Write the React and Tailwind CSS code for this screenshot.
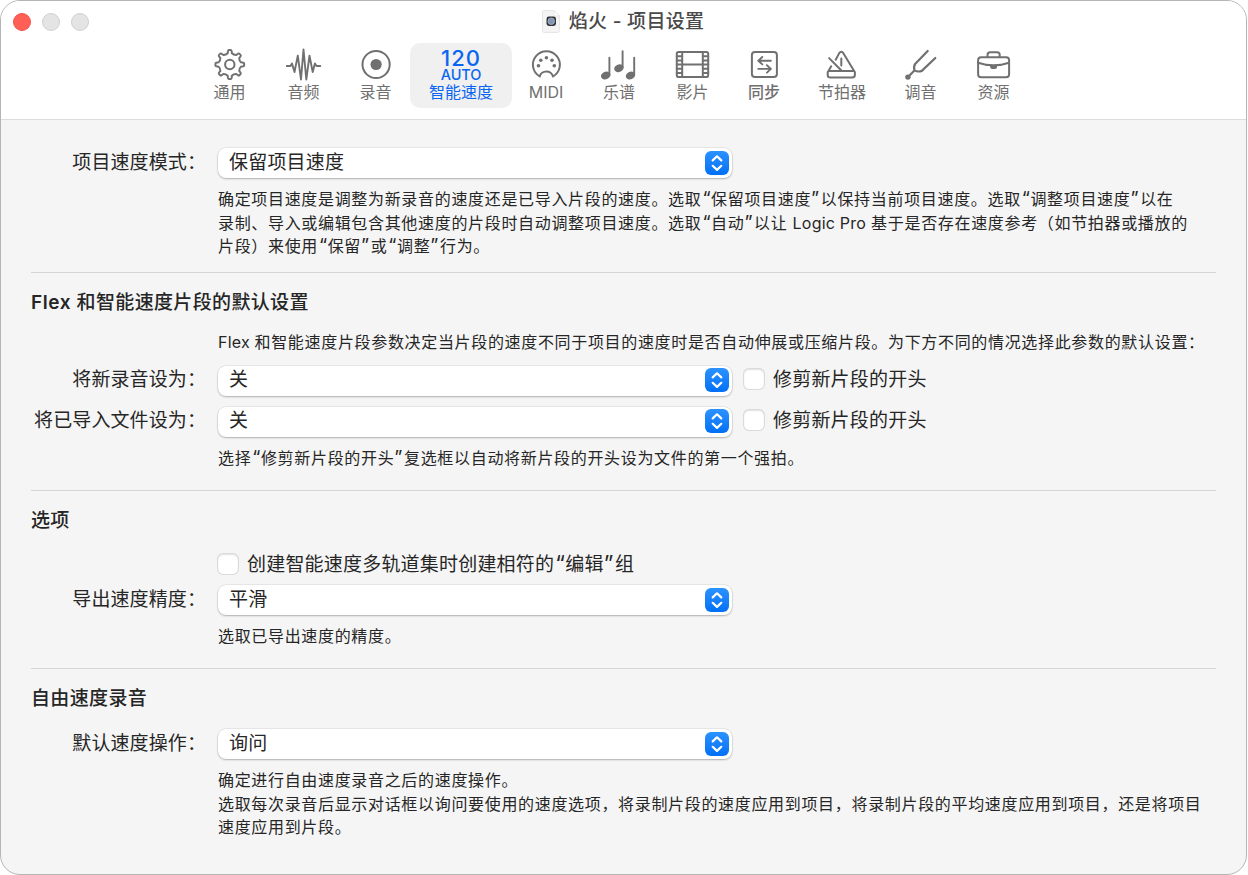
import React from "react";

const stroke = {
  fill: "none",
  stroke: "currentColor",
  strokeWidth: 2,
  strokeLinecap: "round",
  strokeLinejoin: "round",
};

function gearPath(teeth, outer, inner) {
  const pt = (r, a) => `${(r * Math.cos(a)).toFixed(2)} ${(r * Math.sin(a)).toFixed(2)}`;
  const step = (Math.PI * 2) / teeth;
  let d = "";
  for (let i = 0; i < teeth; i++) {
    const a = i * step - Math.PI / 2;
    d += `${i ? "L" : "M"}${pt(inner, a - step * 0.24)}`;
    d += `L${pt(outer - 0.8, a - step * 0.17)}Q${pt(outer + 0.2, a - step * 0.13)} ${pt(outer, a - step * 0.06)}`;
    d += `L${pt(outer, a + step * 0.06)}Q${pt(outer + 0.2, a + step * 0.13)} ${pt(outer - 0.8, a + step * 0.17)}`;
    d += `L${pt(inner, a + step * 0.24)}`;
    d += `Q${pt(inner - 1.3, a + step * 0.5)} ${pt(inner, a + step * 0.76)}`;
  }
  return d + "Z";
}

function Icon({ children }) {
  return (
    <svg className="shrink-0" width="36" height="36" viewBox="0.5 0 36 36" {...stroke}>
      {children}
    </svg>
  );
}

const GearIcon = () => (
  <Icon>
    <g transform="translate(18.3 17.5)">
      <path d={gearPath(8, 14.4, 11.4)} />
      <circle r="4.7" />
    </g>
  </Icon>
);

const WaveIcon = () => (
  <Icon>
    <path strokeWidth="1.9" d="M1.2 19H5l1.5-2.6L9 25l3.3-16.4L15.500 32.500 18 2.500 20.800 32.500 24 8.600 27.200 25l2.200-8.600L31 19h3.800" />
  </Icon>
);

const RecordIcon = () => (
  <Icon>
    <circle cx="18.600" cy="17.500" r="13.600" />
    <circle cx="18.600" cy="17.500" r="5.600" fill="currentColor" stroke="none" />
  </Icon>
);

const MidiIcon = () => (
  <Icon>
    <path d="M12.300 29.500A13.500 13.500 0 1 1 25.500 29.500C24.500 26.500 22 24.600 18.900 24.600S12.900 26.500 12.300 29.500Z" />
    <g fill="currentColor" stroke="none">
      <circle cx="11" cy="18.700" r="1.800" />
      <circle cx="13.300" cy="13.300" r="1.800" />
      <circle cx="18.900" cy="10.700" r="1.800" />
      <circle cx="24.500" cy="13.300" r="1.800" />
      <circle cx="26.800" cy="18.700" r="1.800" />
    </g>
  </Icon>
);

const NotesIcon = () => (
  <Icon>
    <g strokeWidth="1.900">
      <path d="M8.900 10.800V28M22.100 4.200V20.500M33.700 10.800V28" />
    </g>
    <g fill="currentColor" stroke="none">
      <ellipse cx="5.200" cy="28.500" rx="4.800" ry="3.800" transform="rotate(-20 5.200 28.500)" />
      <ellipse cx="18.400" cy="21.200" rx="4.800" ry="3.800" transform="rotate(-20 18.400 21.200)" />
      <ellipse cx="30" cy="28.500" rx="4.800" ry="3.800" transform="rotate(-20 30 28.500)" />
    </g>
  </Icon>
);

const FilmIcon = () => (
  <Icon>
    <rect x="2.300" y="5" width="31.400" height="25" rx="1.800" />
    <path strokeWidth="2" d="M7.700 5V30M28.300 5V30M7.700 17.600H28.300M2.300 9.300H7.700M2.300 13.400H7.700M2.300 17.600H7.700M2.300 21.800H7.700M2.300 25.900H7.700M28.300 9.300H33.700M28.300 13.400H33.700M28.300 17.600H33.700M28.300 21.800H33.700M28.300 25.900H33.700" />
  </Icon>
);

const SyncIcon = () => (
  <Icon>
    <rect x="6.400" y="5" width="25" height="25" rx="3" />
    <path strokeWidth="1.900" d="M25.400 13.700H12.800M16.800 10L12.800 13.700L16.800 17.400M12.800 21.900H25.400M21.400 18.200L25.400 21.900L21.400 25.600" />
  </Icon>
);

const MetronomeIcon = () => (
  <Icon>
    <path d="M12.200 12.700L15.600 6.400Q17.800 3 20 6.400L31.400 25.300V28.200Q31.100 30.500 28.800 30.500H6.800Q4.300 30.500 4.200 28.200V25.300L7.700 19.300M5.100 24.100H30.500M5.600 11.100L18.100 23.700M17.800 11.500V18.500" />
  </Icon>
);

const ForkIcon = () => (
  <Icon>
    <path strokeWidth="2.200" d="M25.200 4L12.600 17Q11 19.300 11.900 23.400Q15.500 25.300 19.300 23.900L32.800 11M11.900 23.400L6 29.500" />
    <circle cx="5.400" cy="30.100" r="2.700" fill="currentColor" stroke="none" />
  </Icon>
);

const BriefcaseIcon = () => (
  <Icon>
    <rect x="2.600" y="10.200" width="31" height="20" rx="3" />
    <path d="M12 10V8Q12 5.300 14.500 5.300H21.700Q24.200 5.300 24.200 8V10M2.600 15.700Q18 21 33.600 15.700" />
    <path d="M14.600 18.200h7v1.800q-.3 2-2 2h-3q-1.700 0-2-2z" fill="currentColor" stroke="none" />
  </Icon>
);

function Tab({ width, label, icon, bold }) {
  return (
    <button className={`flex h-[65px] flex-col items-center pt-1 text-[#707070] ${width}`}>
      {icon}
      <span className={`-mt-[3px] whitespace-nowrap text-base leading-[24px] ${bold ? "font-medium" : ""}`}>{label}</span>
    </button>
  );
}

function Toolbar() {
  return (
    <nav className="flex justify-start pl-[192px]">
      <Tab width="w-[73px]" label="通用" icon={<GearIcon />} />
      <Tab width="w-[75px]" label="音频" icon={<WaveIcon />} />
      <Tab width="w-[69px]" label="录音" icon={<RecordIcon />} />
      <button className="flex h-[65px] w-[102px] flex-col items-center rounded-[10px] bg-[#f0f0f0] text-[#0a66f0]">
        <span className="mt-[5px] text-[22px] font-medium leading-[20px] tracking-[1px]">120</span>
        <span className="text-[14.5px] font-medium leading-[14px] tracking-[-0.1px]">AUTO</span>
        <span className="-mt-[2px] text-base leading-[24px]">智能速度</span>
      </button>
      <Tab width="w-[68px]" label="MIDI" icon={<MidiIcon />} />
      <Tab width="w-[78px]" label="乐谱" icon={<NotesIcon />} />
      <Tab width="w-[69px]" label="影片" icon={<FilmIcon />} />
      <Tab width="w-[74px]" label="同步" icon={<SyncIcon />} bold />
      <Tab width="w-[82px]" label="节拍器" icon={<MetronomeIcon />} />
      <Tab width="w-[75px]" label="调音" icon={<ForkIcon />} />
      <Tab width="w-[71px]" label="资源" icon={<BriefcaseIcon />} />
    </nav>
  );
}

function TitleBar() {
  return (
    <div className="grid h-[42px] grid-cols-[1fr_auto_1fr] items-center pl-[12px]">
      <div className="flex gap-[11px]">
        <span className="size-[18px] rounded-full border border-[#f0544c] bg-[#ff5f57]" />
        <span className="size-[18px] rounded-full border border-[#d0d0d0] bg-[#e4e4e4]" />
        <span className="size-[18px] rounded-full border border-[#d0d0d0] bg-[#e4e4e4]" />
      </div>
      <div className="flex items-center gap-[9px] pr-[13px]">
        <svg className="-mt-[2px]" width="18" height="23" viewBox="0 0 18 23">
          <path d="M2 .5H12L17.500 6V20.500Q17.500 22.500 15.500 22.500H2.500Q.5 22.500 .5 20.500V2Q.5 .5 2 .5Z" fill="#f4f4f4" stroke="#e6e6e6" />
          <path d="M12 .5V6H17.500Z" fill="#fff" stroke="#e2e2e2" strokeWidth=".7" />
          <rect x="4.500" y="6.500" width="9.500" height="9.500" rx="2.400" fill="#30343a" />
          <circle cx="9.250" cy="11.250" r="3.300" fill="#8295b5" stroke="#b8c0cc" strokeWidth=".7" />
        </svg>
        <h1 className="whitespace-nowrap text-[19px] font-medium leading-6 tracking-[0.300px] text-[#4a4a4a]">焰火 - 项目设置</h1>
      </div>
    </div>
  );
}

function Select({ value }) {
  return (
    <div className="flex h-[30px] w-[514px] shrink-0 items-center justify-between rounded-[8px] bg-white pl-[11px] pr-[3px] shadow-[0_0_0_0.500px_rgba(0,0,0,0.1),0_1px_2px_rgba(0,0,0,0.24)]">
      <span className="-mt-[1px]">{value}</span>
      <span className="-mt-[1px] flex size-6 items-center justify-center rounded-[6px] bg-linear-to-b from-[#2b92ff] to-[#0070f5] text-white">
        <svg width="24" height="24" viewBox="0 0 24 24" {...stroke} strokeWidth="2.200">
          <path d="M7.700 9.400L12 5.300L16.300 9.400M7.700 14.800L12 18.900L16.300 14.800" />
        </svg>
      </span>
    </div>
  );
}

function Checkbox({ label, offset = "" }) {
  return (
    <label className={`flex items-center gap-[9px] whitespace-nowrap ${offset}`}>
      <span className="-mt-[2px] size-[20px] rounded-[5px] bg-white shadow-[0_0_0_1px_rgba(0,0,0,0.11),inset_0_1px_1.500px_rgba(0,0,0,0.12)]" />
      <span>{label}</span>
    </label>
  );
}

function Row({ label, children }) {
  return (
    <div className="flex h-[30px] items-center">
      <div className="-mt-[1px] w-[217px] shrink-0 whitespace-nowrap pr-[12px] text-right tracking-[0.100px]">{label}</div>
      {children}
    </div>
  );
}

function Note({ children, className }) {
  return (
    <div className={`ml-[217px] whitespace-nowrap text-base leading-[23.600px] tracking-[0.670px] ${className}`}>
      {children}
    </div>
  );
}

const Quoted = ({ children }) => (
  <>
    <span className="ml-[1px] text-[1.15em] leading-none tracking-[0.500px]">“</span>
    {children}
    <span className="text-[1.15em] leading-none tracking-[1.600px]">”</span>
  </>
);

const Latin = ({ children }) => <span className="tracking-[0.200px]">{children}</span>;

const Divider = () => <hr className="ml-[30px] mr-[30px] border-t border-[#d5d5d5]" />;

const Heading = ({ children }) => (
  <h2 className="pl-[30px] pt-[16px] text-[19px] font-medium leading-7 tracking-[0.350px]">{children}</h2>
);

export default function App() {
  return (
    <div className="h-[875px] w-[1248px] overflow-hidden bg-white font-['Inter','Noto_Sans_CJK_SC',sans-serif]">
      <main className="flex h-[875px] w-[1247px] flex-col overflow-hidden rounded-[20px] border border-[#b5b5b5] bg-[#f5f5f5] text-[19px] leading-[28px] tracking-[0.200px] text-[#262626]">
        <header className="h-[119px] shrink-0 border-b border-[#dcdcdc] bg-white tracking-normal">
          <TitleBar />
          <Toolbar />
        </header>

        <section className="h-[152px] shrink-0 pt-[28px]">
          <Row label="项目速度模式：">
            <Select value="保留项目速度" />
          </Row>
          <Note className="pt-[10px]">
            <p>确定项目速度是调整为新录音的速度还是已导入片段的速度。选取<Quoted>保留项目速度</Quoted>以保持当前项目速度。选取<Quoted>调整项目速度</Quoted>以在</p>
            <p>录制、导入或编辑包含其他速度的片段时自动调整项目速度。选取<Quoted>自动</Quoted>以让 <Latin>Logic Pro</Latin> 基于是否存在速度参考（如节拍器或播放的</p>
            <p>片段）来使用<Quoted>保留</Quoted>或<Quoted>调整</Quoted>行为。</p>
          </Note>
        </section>
        <Divider />

        <section className="h-[217px] shrink-0">
          <Heading><span className="font-semibold tracking-[0.600px]">Flex </span>和智能速度片段的默认设置</Heading>
          <Note className="pt-[14px]">
            <p><Latin>Flex </Latin>和智能速度片段参数决定当片段的速度不同于项目的速度时是否自动伸展或压缩片段。为下方不同的情况选择此参数的默认设置：</p>
          </Note>
          <div className="flex flex-col gap-[11px] pt-[11px]">
            <Row label="将新录音设为：">
              <Select value="关" />
              <Checkbox offset="ml-[12px] -mt-[1px]" label="修剪新片段的开头" />
            </Row>
            <Row label="将已导入文件设为：">
              <Select value="关" />
              <Checkbox offset="ml-[12px] -mt-[1px]" label="修剪新片段的开头" />
            </Row>
          </div>
          <Note className="pt-[10px]">
            <p>选择<Quoted>修剪新片段的开头</Quoted>复选框以自动将新片段的开头设为文件的第一个强拍。</p>
          </Note>
        </section>
        <Divider />

        <section className="h-[177px] shrink-0">
          <Heading>选项</Heading>
          <div className="mt-[15px] flex h-[30px] items-center pl-[217px]">
            <Checkbox
              label={
                <>
                  创建智能速度多轨道集时创建相符的<Quoted>编辑</Quoted>组
                </>
              }
            />
          </div>
          <div className="pt-[5px]">
            <Row label="导出速度精度：">
              <Select value="平滑" />
            </Row>
          </div>
          <Note className="pt-[10px]">
            <p>选取已导出速度的精度。</p>
          </Note>
        </section>
        <Divider />

        <section className="shrink-0">
          <Heading>自由速度录音</Heading>
          <div className="pt-[16px]">
            <Row label="默认速度操作：">
              <Select value="询问" />
            </Row>
          </div>
          <Note className="pt-[10px]">
            <p>确定进行自由速度录音之后的速度操作。</p>
            <p>选取每次录音后显示对话框以询问要使用的速度选项，将录制片段的速度应用到项目，将录制片段的平均速度应用到项目，还是将项目</p>
            <p>速度应用到片段。</p>
          </Note>
        </section>
      </main>
    </div>
  );
}
